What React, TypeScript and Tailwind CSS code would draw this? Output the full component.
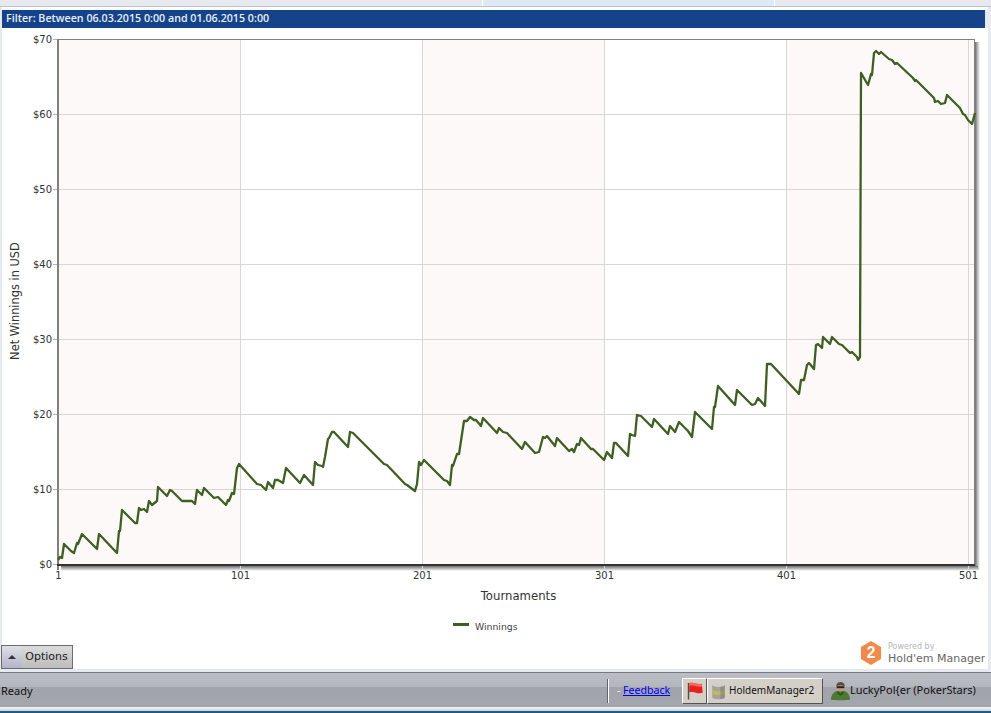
const points = [
  [58, 560], [60, 557], [62, 558], [64, 544], [71, 551], [74, 553], [77, 543], [78, 544], [82, 534], [97, 549], [99, 534], [117, 553],
  [119, 531], [120, 531], [122, 510], [135, 523], [137, 523], [139, 508], [141, 510], [144, 509], [147, 512], [149, 501], [152, 505],
  [157, 501], [158, 487], [167, 496], [170, 490], [172, 491], [182, 501], [192, 501], [195, 504], [197, 490], [202, 495], [204, 488],
  [214, 498], [218, 497], [226, 505], [228, 500], [229, 501], [232, 493], [234, 494], [237, 468], [239, 464], [257, 484], [261, 485],
  [266, 490], [268, 482], [273, 488], [275, 480], [278, 480], [283, 483], [286, 468], [300, 483], [304, 475], [313, 485], [315, 462],
  [318, 465], [322, 466], [323, 467], [325, 457], [328, 439], [329, 438], [332, 432], [334, 432], [348, 447], [350, 432], [353, 433],
  [384, 464], [387, 465], [405, 484], [407, 485], [415, 491], [417, 484], [419, 462], [421, 465], [424, 460], [444, 480], [447, 481],
  [450, 485], [452, 465], [453, 466], [457, 454], [459, 454], [464, 421], [467, 421], [470, 417], [474, 420], [476, 420], [481, 426],
  [483, 418], [497, 433], [499, 428], [503, 432], [507, 433], [522, 449], [525, 442], [535, 453], [539, 452], [543, 437], [545, 438],
  [547, 436], [555, 446], [557, 438], [569, 451], [572, 449], [574, 452], [577, 444], [579, 445], [581, 438], [591, 449], [593, 449],
  [604, 460], [607, 452], [612, 458], [614, 443], [616, 443], [628, 456], [630, 434], [632, 435], [635, 436], [637, 415], [641, 416],
  [652, 427], [654, 419], [668, 434], [670, 426], [675, 432], [679, 422], [688, 431], [692, 437], [695, 412], [712, 429], [714, 407],
  [715, 407], [718, 386], [735, 405], [737, 390], [752, 405], [755, 404], [758, 398], [765, 406], [767, 364], [771, 364], [799, 394],
  [801, 380], [804, 380], [807, 365], [809, 363], [814, 369], [816, 345], [818, 344], [822, 348], [823, 337], [830, 344], [832, 337],
  [839, 344], [842, 345], [850, 353], [852, 352], [857, 357], [858, 360], [860, 357], [861, 73], [868, 85], [871, 74], [872, 75],
  [874, 53], [876, 51], [879, 54], [881, 52], [889, 59], [892, 60], [895, 64], [897, 63], [913, 78], [915, 81], [916, 80], [934, 98],
  [935, 102], [938, 101], [941, 104], [945, 103], [947, 95], [960, 108], [963, 114], [965, 115], [968, 120], [972, 124], [975, 113],
];

const yLabels = ['$70', '$60', '$50', '$40', '$30', '$20', '$10', '$0'];
const xLabels = ['1', '101', '201', '301', '401', '501'];

function Chart() {
  return (
    <svg viewBox="2 28 983 612" className="block h-[612px] w-[983px] font-['DejaVu_Sans',sans-serif]">
      <defs>
        <linearGradient id="shadowRight" x1="0" x2="1" y1="0" y2="0">
          <stop offset="0" stopColor="#6f6f6f" />
          <stop offset="1" stopColor="#ffffff" />
        </linearGradient>
        <linearGradient id="shadowBottom" x1="0" x2="0" y1="0" y2="1">
          <stop offset="0" stopColor="#6f6f6f" />
          <stop offset="1" stopColor="#ffffff" />
        </linearGradient>
      </defs>

      <rect x="975" y="42" width="5" height="528" fill="url(#shadowRight)" />
      <rect x="61" y="566" width="917" height="5" fill="url(#shadowBottom)" />

      <rect x="58" y="39" width="917" height="526" fill="#ffffff" />
      <rect x="58" y="39" width="182" height="526" fill="#fdf9f9" />
      <rect x="422" y="39" width="182" height="526" fill="#fdf9f9" />
      <rect x="786" y="39" width="189" height="526" fill="#fdf9f9" />

      {yLabels.map((label, i) => {
        const y = 39.5 + i * 75;
        return (
          <g key={label}>
            {i > 0 && i < 7 && <line x1="58" x2="975" y1={y} y2={y} stroke="#d9d6d6" />}
            <line x1="53" x2="58" y1={y} y2={y} stroke="#b5b5b5" />
            <text x="52" y={y + 3.5} textAnchor="end" className="fill-[#333333] text-[10px]">{label}</text>
          </g>
        );
      })}

      {xLabels.map((label, i) => {
        const x = 58.5 + i * 182;
        return (
          <g key={label}>
            {i > 0 && <line x1={x} x2={x} y1="39" y2="570" stroke="#d9d6d6" />}
            <text x={x} y="579" textAnchor="middle" className="fill-[#333333] text-[10px]">{label}</text>
          </g>
        );
      })}

      <line x1="58" x2="975" y1="39.5" y2="39.5" stroke="#808080" />
      <line x1="58" x2="58" y1="39" y2="570" stroke="#808080" strokeWidth="2" />
      <line x1="974.5" x2="974.5" y1="39" y2="566" stroke="#808080" />
      <line x1="57" x2="975" y1="565" y2="565" stroke="#333333" strokeWidth="2" />

      <polyline
        points={points.map((p) => p.join(',')).join(' ')}
        fill="none"
        stroke="#3f5f22"
        strokeWidth="2.3"
        strokeLinejoin="round"
      />

      <text x="518.5" y="600" textAnchor="middle" className="fill-[#333333] text-[11.7px]">Tournaments</text>
      <text transform="translate(19 301) rotate(-90)" textAnchor="middle" className="fill-[#333333] text-[11.4px]">Net Winnings in USD</text>

      <rect x="453" y="623" width="16" height="3" fill="#3f5f22" />
      <text x="475" y="630" className="fill-[#444444] text-[9.3px]">Winnings</text>
    </svg>
  );
}

function HemLogo() {
  return (
    <svg viewBox="0 0 24 26" className="h-[24px] w-[22px] shrink-0">
      <polygon points="12,0 23,6.5 23,19.5 12,26 1,19.5 1,6.5" fill="#f08a4b" />
      <text x="12" y="19" textAnchor="middle" className="fill-white font-['Liberation_Sans',sans-serif] text-[17px] font-bold">2</text>
    </svg>
  );
}

function FlagIcon() {
  return (
    <svg viewBox="0 0 20 20" className="h-[20px] w-[18px] shrink-0">
      <rect x="2" y="1" width="1.6" height="18.5" fill="#5a4a4a" />
      <path d="M3.6 1.5c5-2 7 2 14 .5l1 10c-6 2-9-2.5-15-.5z" fill="#e8211c" />
      <path d="M3.6 1.5c5-2 7 2 14 .5l.3 3c-6 1.5-9-2.5-14.3-.5z" fill="#f46a5e" />
    </svg>
  );
}

function DatabaseIcon() {
  return (
    <svg viewBox="0 0 16 20" className="h-[18px] w-[15px] shrink-0">
      <path d="M1 3v14c0 3 14 3 14 0V3z" fill="#a4a49c" />
      <path d="M1 8v4c0 3 14 3 14 0V8c0 3-14 3-14 0z" fill="#c9b65a" />
      <path d="M10 4h5v13c0 1-2 2-5 2z" fill="#7d7d74" fillOpacity="0.55" />
      <ellipse cx="8" cy="3" rx="7" ry="2.6" fill="#cfcfc8" />
    </svg>
  );
}

function PlayerIcon() {
  return (
    <svg viewBox="0 0 20 20" className="h-[20px] w-[19px] shrink-0">
      <path d="M0 19c0-5 3-8 6-9h8c3 1 6 4 6 9 0 1-20 1-20 0z" fill="#4c7a34" />
      <path d="M7 10l3 3 3-3v3l-3 2-3-2z" fill="#2f5220" />
      <circle cx="10" cy="6" r="4.5" fill="#c09a7c" />
      <path d="M5.5 5c0-6 9-6 9 0-3-1.5-6-1.5-9 0z" fill="#5e4a3a" />
      <rect x="6" y="5" width="8" height="2" fill="#26221f" />
    </svg>
  );
}

export default function App() {
  return (
    <div className="flex h-[713px] w-[991px] flex-col overflow-hidden bg-[#e6e9ee] font-['DejaVu_Sans',sans-serif]">
      {/* tab strip remains */}
      <div className="flex h-[6px] shrink-0">
        <div className="w-[482px]" />
        <div className="w-[293px] border-x border-x-white bg-[#dfeaf6]" />
      </div>
      <div className="h-px shrink-0 bg-[#bfc2c9]" />
      <div className="ml-[2px] h-[3px] w-[986px] shrink-0 bg-white" />

      <div className="ml-[2px] flex h-[18px] w-[983px] shrink-0 items-center bg-[#15438a] pb-px pl-1 font-['Open_Sans',sans-serif] text-[10.7px] font-semibold text-[#e8eef8]">
        Filter: Between 06.03.2015 0:00 and 01.06.2015 0:00
      </div>

      <div className="ml-[2px] flex w-[986px] flex-1 flex-col bg-white">
        <Chart />
        <div className="flex flex-1 items-end justify-between">
          <div className="-ml-px flex h-[24px] w-[72px] items-stretch border border-[#6d6d6d] bg-gradient-to-b from-[#dcdcdc] to-[#bcbcbc] text-[11px] text-[#222222]">
            <div className="flex w-[19px] items-center justify-center bg-gradient-to-b from-[#dfdfe6] to-[#b5b3cb]">
              <div className="h-0 w-0 border-x-[4px] border-b-[4px] border-x-transparent border-b-[#333333]" />
            </div>
            <span className="flex flex-1 items-center justify-center pt-px">Options</span>
          </div>
          <div className="mb-[4px] mr-[3px] flex w-[125px] items-center gap-[6px] overflow-hidden">
            <HemLogo />
            <div className="whitespace-nowrap">
              <div className="text-[8px] leading-[10px] text-[#b5b5b5]">Powered by</div>
              <div className="text-[11px] leading-[13px] text-[#666666]">Hold'em Manager</div>
            </div>
          </div>
        </div>
      </div>

      <div className="h-[3px] shrink-0" />
      <div className="flex h-[35px] shrink-0 items-center border-t border-t-[#77797f] bg-[linear-gradient(#bbbdc5_0,#b4b6be_14px,#a2a4ac_14px,#a4a6ae_100%)] pl-px pt-px font-['Noto_Sans',sans-serif] text-[11px] text-[#111111]">
        <span className="pt-px">Ready</span>
        <div className="ml-auto h-[24px] w-[2px] border-l border-l-[#63656c] bg-white" />
        <span className="ml-[8px] w-[6px] text-[#f2f2f2]">-</span>
        <a href="#" className="w-[59px] text-[10.6px] text-[#0000ee] underline">Feedback</a>
        <div className="flex h-[26px] w-[25px] items-center justify-center border border-b-[#555555] border-l-white border-r-[#555555] border-t-white bg-[#d4d0c8]">
          <FlagIcon />
        </div>
        <div className="flex h-[26px] w-[116px] items-center gap-[3px] border border-b-[#555555] border-l-white border-r-[#555555] border-t-white bg-[#d4d0c8] pl-[3px]">
          <DatabaseIcon />
          <span className="text-[10px]">HoldemManager2</span>
        </div>
        <div className="ml-[8px] flex w-[160px] items-center">
          <PlayerIcon />
          <span className="whitespace-nowrap">LuckyPol{'{'}er (PokerStars)</span>
        </div>
      </div>
      <div className="h-[2px] shrink-0 bg-[#eceef0]" />
      <div className="h-[2px] shrink-0 bg-[#d8dade]" />
      <div className="h-[2px] shrink-0 bg-[#1c5a8c]" />
    </div>
  );
}
